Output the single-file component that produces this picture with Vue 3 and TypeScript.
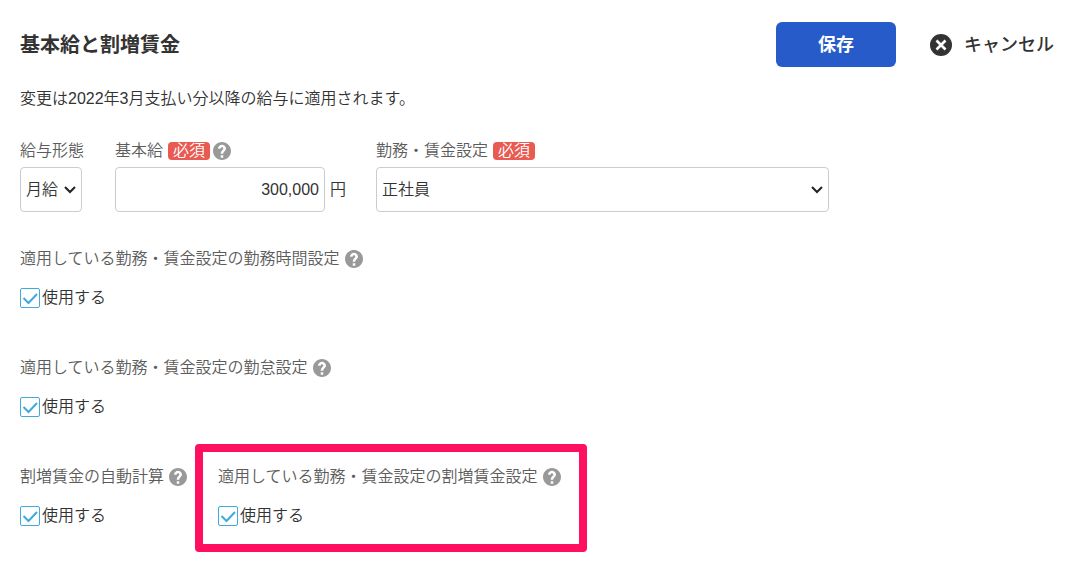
<script setup lang="ts">
import { ref } from 'vue'

interface Setting {
  id: string
  label: string
  highlighted?: boolean
}

const payType = ref('月給')
const baseSalary = ref('300,000')
const workRule = ref('正社員')
const enabled = ref<Record<string, boolean>>({ hours: true, attendance: true, auto: true, premium: true })

const rows: Setting[][] = [
  [{ id: 'hours', label: '適用している勤務・賃金設定の勤務時間設定' }],
  [{ id: 'attendance', label: '適用している勤務・賃金設定の勤怠設定' }],
  [
    { id: 'auto', label: '割増賃金の自動計算' },
    { id: 'premium', label: '適用している勤務・賃金設定の割増賃金設定', highlighted: true },
  ],
]

const helpPath =
  'M12 2C6.48 2 2 6.48 2 12s4.48 10 10 10 10-4.48 10-10S17.52 2 12 2zm1.4 17.4h-2.8v-2.8h2.8v2.8zm2.1-7.9l-.9.92c-.8.8-1.2 1.4-1.2 2.7h-2.8v-.6c0-1.1.45-2.1 1.17-2.83l1.24-1.26c.3-.3.45-.6.45-1.05 0-.85-.65-1.5-1.5-1.5s-1.5.65-1.5 1.5H7.6c0-2.4 2-4.3 4.4-4.3s4.4 1.9 4.4 4.3c0 .85-.36 1.6-.9 2.12z'
</script>

<template>
  <form class="page" @submit.prevent>
    <header class="header">
      <h1 class="title">基本給と割増賃金</h1>
      <button class="save" type="submit">保存</button>
      <button class="cancel" type="button">
        <svg class="cancel-icon" viewBox="0 0 22 22" aria-hidden="true">
          <circle cx="11" cy="11" r="11" />
          <path d="M6.5 6.5l9 9M15.5 6.5l-9 9" />
        </svg>
        <span class="cancel-text">キャンセル</span>
      </button>
    </header>

    <p class="note">変更は2022年3月支払い分以降の給与に適用されます。</p>

    <div class="fields">
      <div class="field pay-type">
        <div class="caption"><label for="pay-type">給与形態</label></div>
        <div class="select-wrap compact">
          <select id="pay-type" v-model="payType" class="control">
            <option>月給</option>
            <option>日給</option>
            <option>時給</option>
          </select>
          <svg class="chevron" viewBox="0 0 12 8" aria-hidden="true"><path d="M1 1l5 5 5-5" /></svg>
        </div>
      </div>

      <div class="field">
        <div class="caption">
          <label for="base-salary">基本給</label>
          <span class="required">必須</span>
          <button class="help" type="button" aria-label="ヘルプ">
            <svg viewBox="2 2 20 20" aria-hidden="true"><path :d="helpPath" /></svg>
          </button>
        </div>
        <div class="amount">
          <input id="base-salary" v-model="baseSalary" class="control" type="text" inputmode="numeric" />
          <span>円</span>
        </div>
      </div>

      <div class="field work-rule">
        <div class="caption">
          <label for="work-rule">勤務・賃金設定</label>
          <span class="required">必須</span>
        </div>
        <div class="select-wrap">
          <select id="work-rule" v-model="workRule" class="control">
            <option>正社員</option>
          </select>
          <svg class="chevron" viewBox="0 0 12 8" aria-hidden="true"><path d="M1 1l5 5 5-5" /></svg>
        </div>
      </div>
    </div>

    <div class="settings">
      <div v-for="(row, index) in rows" :key="index" class="row">
        <div
          v-for="item in row"
          :key="item.id"
          class="setting"
          :class="{ highlighted: item.highlighted }"
          role="group"
          :aria-labelledby="`${item.id}-caption`"
        >
          <div class="caption wide">
            <span :id="`${item.id}-caption`">{{ item.label }}</span>
            <button class="help" type="button" aria-label="ヘルプ">
              <svg viewBox="2 2 20 20" aria-hidden="true"><path :d="helpPath" /></svg>
            </button>
          </div>
          <label class="check">
            <span class="box">
              <input v-model="enabled[item.id]" type="checkbox" />
              <svg v-if="enabled[item.id]" viewBox="0 0 20 20" aria-hidden="true"><path d="M3.5 10l5 5 8.5-9" /></svg>
            </span>
            使用する
          </label>
        </div>
      </div>
    </div>
  </form>
</template>

<style>
body {
  margin: 0;
  background: #fff;
}
</style>

<style scoped>
.page {
  padding: 22px 26px 32px 20px;
  font-family: 'Liberation Sans', 'Noto Sans CJK JP', sans-serif;
  font-size: 16px;
  font-weight: 350;
  line-height: 24px;
  color: #333;
}

.page * {
  box-sizing: border-box;
}

.header {
  display: flex;
  align-items: center;
}

.title {
  flex: 1;
  margin: 0;
  font-size: 20px;
  font-weight: 700;
}

button {
  padding: 0;
  border: 0;
  background: none;
  font-family: inherit;
  color: inherit;
  cursor: pointer;
}

.save {
  width: 120px;
  height: 45px;
  padding-bottom: 4px;
  border-radius: 6px;
  background: #265bc9;
  color: #fff;
  font-size: 18px;
  font-weight: 700;
}

.cancel {
  display: flex;
  align-items: center;
  gap: 12px;
  margin-left: 34px;
  font-size: 18px;
  font-weight: 500;
}

.cancel-text {
  padding-bottom: 4px;
}

.cancel-icon {
  width: 22px;
  height: 22px;
  fill: #333;
}

.cancel-icon path {
  stroke: #fff;
  stroke-width: 2.6;
}

.note {
  margin: 20px 0 28px;
}

.fields {
  display: flex;
  gap: 30px;
}

.row {
  display: flex;
  gap: 31px;
}

.pay-type {
  min-width: 65px;
}

.work-rule {
  flex: 0 1 453px;
}

.caption {
  display: flex;
  align-items: center;
  height: 24px;
  margin-bottom: 4px;
  color: #5c5c5c;
  white-space: nowrap;
}

.caption.wide {
  margin-bottom: 15px;
}

.required {
  height: 18px;
  margin-left: 5px;
  padding: 0 5px;
  border-radius: 4px;
  background: #e85a52;
  color: #fff;
  line-height: 17px;
}

.help {
  width: 18px;
  height: 18px;
  margin-left: 3px;
}

.wide .help {
  margin-left: 5px;
}

.help svg {
  display: block;
  fill: #999;
}

.control {
  display: block;
  width: 100%;
  height: 45px;
  padding: 0 5px;
  border: 1px solid #ccc;
  border-radius: 4px;
  background: #fff;
  appearance: none;
  font: inherit;
  color: inherit;
}

.select-wrap {
  position: relative;
}

.select-wrap.compact {
  width: 62px;
}

.chevron {
  position: absolute;
  top: 19px;
  right: 6px;
  width: 12px;
  height: 8px;
  fill: none;
  stroke: #222;
  stroke-width: 2;
  pointer-events: none;
}

.amount {
  display: flex;
  align-items: center;
  gap: 5px;
}

.amount .control {
  width: 210px;
  text-align: right;
}

.settings {
  display: flex;
  flex-direction: column;
  gap: 46px;
  margin-top: 35px;
}

.setting {
  position: relative;
}

.highlighted::after {
  content: '';
  position: absolute;
  inset: -21px -26px -24px -23px;
  border: 8px solid #ff0f5f;
  border-radius: 4px;
  pointer-events: none;
}

.check {
  display: flex;
  align-items: center;
  gap: 2px;
  width: max-content;
}

.box {
  display: grid;
  width: 20px;
  height: 20px;
}

.box > * {
  grid-area: 1 / 1;
  width: 20px;
  height: 20px;
}

.box input {
  margin: 0;
  border: 1px solid #3fa9e0;
  border-radius: 2px;
  background: #fff;
  appearance: none;
}

.box svg {
  fill: none;
  stroke: #3fa9e0;
  stroke-width: 2;
  pointer-events: none;
}
</style>
